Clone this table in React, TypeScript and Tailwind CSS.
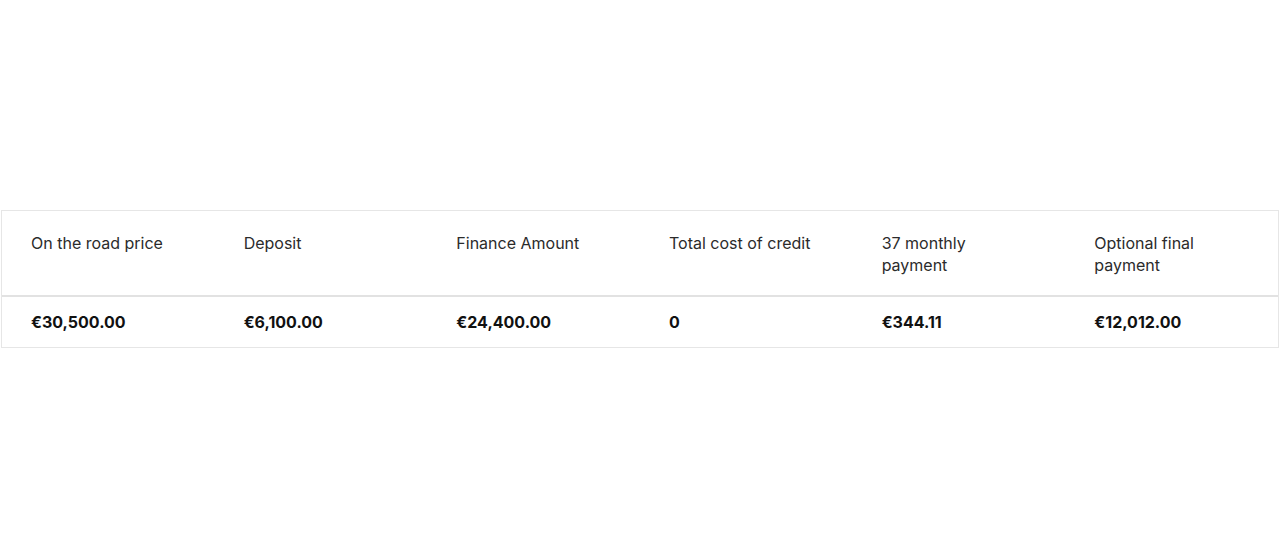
import React from 'react';

const rows = [
    { label: 'On the road price', value: '€30,500.00' },
    { label: 'Deposit', value: '€6,100.00' },
    { label: 'Finance Amount', value: '€24,400.00' },
    { label: 'Total cost of credit', value: '0' },
    { label: '37 monthly payment', value: '€344.11' },
    { label: 'Optional final payment', value: '€12,012.00' },
];

const App: React.FC = () => {
    return (
        <div className="h-[557px] flex items-center bg-white font-['Inter',sans-serif]">
            <div className="mx-px w-full border border-[#e6e6e6]">
                <table className="w-full table-fixed border-collapse">
                    <thead>
                        <tr className="border-b-2 border-[#e2e2e2]">
                            {rows.map((r) => (
                                <th key={r.label} className="text-left align-top font-normal text-[16px] leading-[22px] text-[#2b2b2b] pl-[29px] pr-[40px] pt-[21px] pb-[19px] h-[85px]">
                                    {r.label}
                                </th>
                            ))}
                        </tr>
                    </thead>
                    <tbody>
                        <tr>
                            {rows.map((r) => (
                                <td key={r.label} className="text-left font-bold text-[16px] leading-[22px] text-[#111] pl-[29px] pr-[20px] py-[14px]">
                                    {r.value}
                                </td>
                            ))}
                        </tr>
                    </tbody>
                </table>
            </div>
        </div>
    );
};

export default App;
